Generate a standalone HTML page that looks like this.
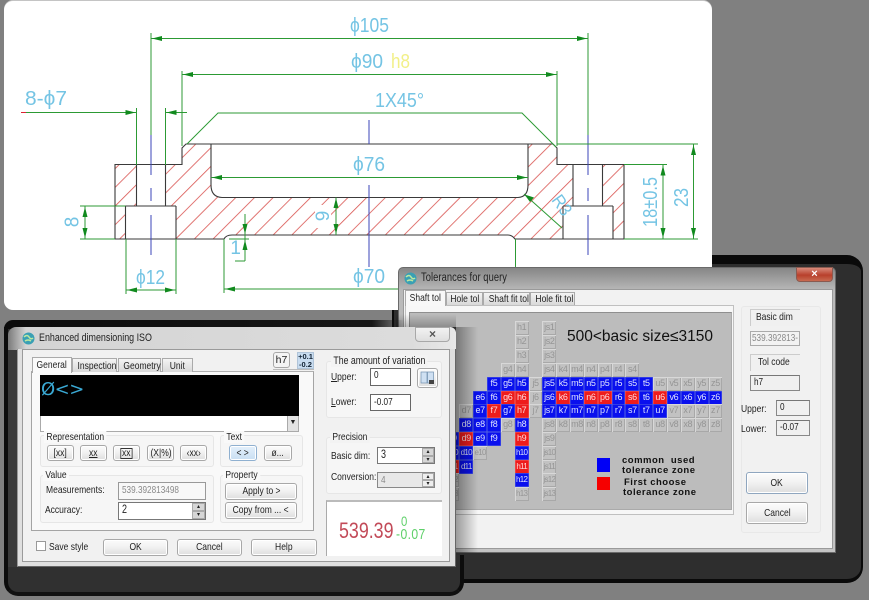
<!DOCTYPE html>
<html><head><meta charset="utf-8"><style>
html,body{margin:0;padding:0;background:#808080}
#w{position:relative;width:869px;height:600px;overflow:hidden;background:#808080;font:10.500px "Liberation Sans",sans-serif;color:#222;filter:blur(.3px)}
#w div{box-sizing:border-box}
.a{position:absolute}
.t{position:absolute;white-space:nowrap;line-height:12px;height:12px;transform:scaleX(.81);transform-origin:0 50%}
.b{position:absolute;border:1px solid #a8a8a8;border-radius:3px;background:linear-gradient(#fbfbfb,#f2f2f2 45%,#dedede);text-align:center;white-space:nowrap;box-shadow:inset 0 0 0 1px #fff}
.b span,.tab span{display:inline-block;transform:scaleX(.81);transform-origin:50% 50%}
.i{position:absolute;border:1px solid #888;border-top-color:#777;background:#fff;padding-left:3px;white-space:nowrap;overflow:hidden}
.i span{display:inline-block;transform:scaleX(.78);transform-origin:0 50%}
.g{position:absolute;border:1px solid #e6e6e6;border-radius:3px;background:#f6f6f6}
.l{position:absolute;background:#f0f0f0;padding:0 3px;line-height:12px;white-space:nowrap;transform:scaleX(.81);transform-origin:0 50%}
.tab{position:absolute;border:1px solid #aaa;border-bottom:0;background:linear-gradient(#f4f4f4,#d8d8d8);text-align:center;white-space:nowrap;line-height:14px}
.sp{position:absolute;background:#d6d6d6;border:1px solid #aaa;color:#222;font-size:6px;line-height:6px;text-align:center}
.r{position:absolute;left:445.500px;height:14px;white-space:nowrap;font-size:0}
.r span{display:inline-block;width:13.850px;height:14px;vertical-align:top;font-size:9px;letter-spacing:-.35px;line-height:13px;text-align:center;overflow:hidden}
.r span.x{font-size:8px;letter-spacing:-.7px}
.B{background:#0a10ee;color:#dfe4ff;box-shadow:inset 0 0 0 .5px #5566dd}
.R{background:#ee1c1c;color:#ffd9d9;box-shadow:inset 0 0 0 .5px #f06060}
.G{background:#c2c2c2;color:#959595;box-shadow:inset 1px 1px 0 #d8d8d8,inset -1px -1px 0 #a8a8a8}
</style></head><body><div id="w">

<!-- dialog 2 outer dark frame -->
<div class="a" style="left:392px;top:255px;width:471px;height:328px;background:#2e2e2e;border:2px solid #0a0a0a;border-radius:0 16px 16px 0;border-top-width:9px;border-bottom-width:4px"></div>

<!-- drawing card -->
<div class="a" style="left:4px;top:1px;width:708px;height:309px;background:#fff;border-radius:9px;box-shadow:0 -1px 0 #c4c4c4"></div>
<div class="a" style="left:600px;top:250px;width:108px;height:20px;background:#fff"></div>

<svg class="a" style="left:0;top:0" width="869" height="320" viewBox="0 0 869 320">
<defs>
<pattern id="h" patternUnits="userSpaceOnUse" width="13.22" height="13.22" patternTransform="rotate(45)"><line x1="2.34" y1="0" x2="2.34" y2="13.22" stroke="#d9534f" stroke-width=".8"/></pattern>
</defs>
<path d="M115 164.500H182V148L186 144H211V185Q211 197 222 197.500H518Q528 197 528 185V144H553L557 148V164.500H624V239H515Q512 235 508 235H232Q226 235 224 239H115Z" fill="url(#h)" stroke="none"/>
<rect x="136.500" y="164.500" width="29" height="42" fill="#fff"/><rect x="125.500" y="206" width="50.500" height="33" fill="#fff"/>
<rect x="573" y="164.500" width="29.500" height="42" fill="#fff"/><rect x="563" y="206" width="50" height="33" fill="#fff"/>
<rect x="315" y="205" width="16" height="23" fill="#fff"/>
<g fill="none" stroke="#3a3a3a" stroke-width="1.100">
<path d="M115 164.500H182V148L186 144H553L557 148V164.500H624V239H515Q512 235 508 235H232Q226 235 224 239H115Z"/>
<path d="M211 144V185Q211 197 222 197.500H518Q528 197 528 185V144"/>
<path d="M136.500 164.500V206M165.500 164.500V206M125.500 206H176M125.500 206V239M176 206V239"/>
<path d="M573 164.500V206M602.500 164.500V206M563 206H613M563 206V239M613 206V239"/>
</g>
<g stroke="#3b45b8" stroke-width="1" fill="none">
<path d="M151 135V175M151 188V201M151 215V255"/>
<path d="M588 135V175M588 188V201M588 215V255"/>
<path d="M369 120V144M369 185V267"/>
</g>
<g stroke="#2c9a34" stroke-width="1" fill="none">
<path d="M151 33V135M588 33V135M151 38.500H588"/>
<path d="M182 71V146M557 71V146M182 74.500H557"/>
<path d="M26 112.500H136.500M136.500 108V165M165.500 108V165M165.500 112.500H187"/>
<path d="M187 144L218 113H522L556 147"/>
<path d="M557 144H698M624 239H698M693.500 144V239M624 164.500H667M663 164.500V239"/>
<path d="M211 177.500H528"/>
<path d="M224 239V293M224 289H400M515.500 239V268"/>
<path d="M126 239V294M176 239V294M126 290H176"/>
<path d="M80 206H125.500M80 239H115M85 206V239"/>
<path d="M336 197.500V235"/>
<path d="M245 214V261M229 239H249M235 261H245"/>
<path d="M524 194L562 228"/>
</g>
<path d="M21 112.500H26" stroke="#d23" stroke-width="1"/>
<g fill="#118a1e">
<path d="M152 38.500l10-2.500v5zM587 38.500l-10-2.500v5zM183 74.500l10-2.500v5zM556 74.500l-10-2.500v5zM135.500 112.500l-10-2.500v5zM166.500 112.500l10-2.500v5zM212 177.500l10-2.500v5zM527 177.500l-10-2.500v5zM225 289l10-2.500v5zM127 290l10-2.500v5zM175 290l-10-2.500v5z"/>
<path d="M85 207l-2.500 10h5zM85 238l-2.500-10h5zM336 198l-2.500 10h5zM336 234l-2.500-10h5zM245 234l-2.500-10h5zM245 240l-2.500 10h5zM663 165.500l-2.500 10h5zM663 238l-2.500-10h5zM693.500 145l-2.500 10h5zM693.500 238l-2.500-10h5z"/>
<path d="M524.500 194.500l9.500 3-4 4.500z"/>
</g>
<g fill="#74c4e4" font-family="'Liberation Sans',sans-serif" font-size="20">
<text x="350" y="32" textLength="39" lengthAdjust="spacingAndGlyphs">ϕ105</text>
<text x="351" y="68" textLength="32" lengthAdjust="spacingAndGlyphs">ϕ90</text>
<text x="391" y="68" fill="#f2f088" textLength="19" lengthAdjust="spacingAndGlyphs">h8</text>
<text x="375" y="107" textLength="49" lengthAdjust="spacingAndGlyphs">1X45°</text>
<text x="353" y="171" textLength="32" lengthAdjust="spacingAndGlyphs">ϕ76</text>
<text x="353" y="283" textLength="32" lengthAdjust="spacingAndGlyphs">ϕ70</text>
<text x="136" y="284" textLength="29" lengthAdjust="spacingAndGlyphs">ϕ12</text>
<text x="25" y="105" textLength="42" lengthAdjust="spacingAndGlyphs">8-ϕ7</text>
<text x="241" y="254" text-anchor="end" font-size="19">1</text>
<text transform="translate(78.500 222) rotate(-90) scale(.95 1)" text-anchor="middle">8</text>
<text transform="translate(329 216) rotate(-90)" text-anchor="middle" font-size="19">9</text>
<text transform="translate(657 227) rotate(-90)" textLength="50" lengthAdjust="spacingAndGlyphs" font-size="20">18±0.5</text>
<text transform="translate(688 207) rotate(-90)" textLength="19" lengthAdjust="spacingAndGlyphs">23</text>
<text transform="translate(551 200) rotate(55)" font-size="18" textLength="21" lengthAdjust="spacingAndGlyphs">R3</text>
</g>
</svg>

<!-- DIALOG 2 -->
<div class="a" style="left:398px;top:267px;width:438px;height:286px;background:linear-gradient(#868686,#b9b9b9 8%,#c4c4c4);border:1px solid #6a6a6a;border-radius:5px 5px 0 0"></div>
<div class="a" style="left:404px;top:290px;width:428px;height:258px;background:#f2f2f2;box-shadow:0 0 0 1px #9a9a9a"></div>
<svg class="a" style="left:404px;top:272px" width="13" height="13" viewBox="0 0 13 13"><circle cx="6.500" cy="6.500" r="6" fill="#3aa0b4"/><path d="M2 5q3-3 5 0t4 1M3 9q3-2 6 0" stroke="#bfe8a0" stroke-width="1.500" fill="none"/></svg>
<div class="t" style="left:421px;top:272px;font-size:11.500px;letter-spacing:.1px;color:#222">Tolerances for query</div>
<div class="a" style="left:796px;top:267px;width:37px;height:15px;background:linear-gradient(#d88a7a,#b8402c 55%,#c86a50);border:1px solid #8a5a50;border-radius:0 0 4px 4px;color:#fff;text-align:center;font:bold 11px/12px 'Liberation Sans',sans-serif">×</div>

<div class="a" style="left:405px;top:305px;width:329px;height:210px;background:#f7f7f7;border:1px solid #c0c0c0"></div>
<div class="tab" style="left:405px;top:290px;width:41px;height:16px;background:#f8f8f8;z-index:2"><span>Shaft tol</span></div>
<div class="tab" style="left:446px;top:292px;width:37px;height:13px;line-height:13px"><span>Hole tol</span></div>
<div class="tab" style="left:483px;top:292px;width:47px;height:13px;line-height:13px"><span>Shaft fit tol</span></div>
<div class="tab" style="left:530px;top:292px;width:45px;height:13px;line-height:13px"><span>Hole fit tol</span></div>
<div class="a" style="left:409px;top:312px;width:323px;height:198px;background:#bcbcbc;border:1px solid #8f8f8f;border-right-color:#aaa;border-bottom-color:#aaa"></div>

<!-- grid -->
<div class="r" style="top:321px"><span></span><span></span><span></span><span></span><span></span><span class="G">h1</span><span></span><span class="G">js1</span></div>
<div class="r" style="top:335px"><span></span><span></span><span></span><span></span><span></span><span class="G">h2</span><span></span><span class="G">js2</span></div>
<div class="r" style="top:349px"><span></span><span></span><span></span><span></span><span></span><span class="G">h3</span><span></span><span class="G">js3</span></div>
<div class="r" style="top:363px"><span></span><span></span><span></span><span></span><span class="G">g4</span><span class="G">h4</span><span></span><span class="G">js4</span><span class="G">k4</span><span class="G">m4</span><span class="G">n4</span><span class="G">p4</span><span class="G">r4</span><span class="G">s4</span></div>
<div class="r" style="top:377px"><span></span><span></span><span></span><span class="B">f5</span><span class="B">g5</span><span class="B">h5</span><span class="G">j5</span><span class="B">js5</span><span class="B">k5</span><span class="B">m5</span><span class="B">n5</span><span class="B">p5</span><span class="B">r5</span><span class="B">s5</span><span class="B">t5</span><span class="G">u5</span><span class="G">v5</span><span class="G">x5</span><span class="G">y5</span><span class="G">z5</span></div>
<div class="r" style="top:390.500px"><span></span><span></span><span class="B">e6</span><span class="B">f6</span><span class="R">g6</span><span class="R">h6</span><span class="G">j6</span><span class="B">js6</span><span class="R">k6</span><span class="B">m6</span><span class="R">n6</span><span class="R">p6</span><span class="B">r6</span><span class="R">s6</span><span class="B">t6</span><span class="R">u6</span><span class="B">v6</span><span class="B">x6</span><span class="B">y6</span><span class="B">z6</span></div>
<div class="r" style="top:404px"><span></span><span class="G">d7</span><span class="B">e7</span><span class="R">f7</span><span class="B">g7</span><span class="R">h7</span><span class="G">j7</span><span class="B">js7</span><span class="B">k7</span><span class="B">m7</span><span class="B">n7</span><span class="B">p7</span><span class="B">r7</span><span class="B">s7</span><span class="B">t7</span><span class="B">u7</span><span class="G">v7</span><span class="G">x7</span><span class="G">y7</span><span class="G">z7</span></div>
<div class="r" style="top:418px"><span></span><span class="B">d8</span><span class="B">e8</span><span class="B">f8</span><span class="G">g8</span><span class="B">h8</span><span></span><span class="G">js8</span><span class="G">k8</span><span class="G">m8</span><span class="G">n8</span><span class="G">p8</span><span class="G">r8</span><span class="G">s8</span><span class="G">t8</span><span class="G">u8</span><span class="G">v8</span><span class="G">x8</span><span class="G">y8</span><span class="G">z8</span></div>
<div class="r" style="top:432px"><span class="B">c9</span><span class="R">d9</span><span class="B">e9</span><span class="B">f9</span><span></span><span class="R">h9</span><span></span><span class="G">js9</span></div>
<div class="r" style="top:446px"><span class="B x">c10</span><span class="B x">d10</span><span class="G x">e10</span><span></span><span></span><span class="B x">h10</span><span></span><span class="G x">js10</span></div>
<div class="r" style="top:459.500px"><span class="R x">c11</span><span class="B x">d11</span><span></span><span></span><span></span><span class="R x">h11</span><span></span><span class="G x">js11</span></div>
<div class="r" style="top:473px"><span class="G x">c12</span><span></span><span></span><span></span><span></span><span class="B x">h12</span><span></span><span class="G x">js12</span></div>
<div class="r" style="top:487px"><span class="G x">c13</span><span></span><span></span><span></span><span></span><span class="G x">h13</span><span></span><span class="G x">js13</span></div>

<div class="a" style="left:567px;top:329px;white-space:nowrap;font:15.500px/16px 'Liberation Sans',sans-serif;height:16px;color:#111">500&lt;basic size≤3150</div>
<div class="a" style="left:597px;top:458px;width:13px;height:14px;background:#0000f6"></div>
<div class="a" style="left:597px;top:477px;width:13px;height:13px;background:#f60000"></div>
<div class="a" style="left:622px;top:455px;white-space:nowrap;line-height:12px;font-weight:bold;font-size:9.500px;letter-spacing:.5px;color:#111">common&nbsp; used</div>
<div class="a" style="left:622px;top:465px;white-space:nowrap;line-height:12px;font-weight:bold;font-size:9.500px;letter-spacing:.5px;color:#111">tolerance zone</div>
<div class="a" style="left:624px;top:477px;white-space:nowrap;line-height:12px;font-weight:bold;font-size:9.500px;letter-spacing:.5px;color:#111">First choose</div>
<div class="a" style="left:623px;top:487px;white-space:nowrap;line-height:12px;font-weight:bold;font-size:9.500px;letter-spacing:.5px;color:#111">tolerance zone</div>

<!-- right panel dialog 2 -->
<div class="g" style="left:741px;top:306px;width:80px;height:227px;background:#f1f1f1;border-color:#e8e8e8"></div>
<div class="a" style="left:750px;top:309px;width:50px;height:17px;background:#f0f0f0;border-left:1px solid #ccc;border-top:1px solid #ccc;line-height:15px;padding-left:5px"><div class="t" style="line-height:15px;height:15px">Basic dim</div></div>
<div class="i" style="left:750px;top:331px;width:50px;height:15px;background:#f2f2f2;color:#8a8a8a;padding-left:1px;line-height:13px;border-color:#aaa"><span>539.392813-</span></div>
<div class="a" style="left:750px;top:354px;width:50px;height:17px;background:#f0f0f0;border-left:1px solid #ccc;border-top:1px solid #ccc;line-height:15px;padding-left:7px"><div class="t" style="line-height:15px;height:15px">Tol code</div></div>
<div class="i" style="left:750px;top:375px;width:50px;height:16px;background:#f0f0f0;line-height:13px"><span>h7</span></div>
<div class="t" style="left:741px;top:403px">Upper:</div>
<div class="i" style="left:776px;top:400px;width:34px;height:16px;background:#f0f0f0;line-height:12px"><span>0</span></div>
<div class="t" style="left:741px;top:423px">Lower:</div>
<div class="i" style="left:776px;top:420px;width:34px;height:16px;background:#f0f0f0;line-height:13px"><span>-0.07</span></div>
<div class="b" style="left:746px;top:472px;width:62px;height:22px;line-height:20px;border-color:#8fa6bf"><span>OK</span></div>
<div class="b" style="left:746px;top:502px;width:62px;height:22px;line-height:20px"><span>Cancel</span></div>

<!-- shadow of dialog 1 on dialog 2 -->
<div class="a" style="left:456px;top:327px;width:22px;height:226px;background:linear-gradient(90deg,rgba(0,0,0,.36),rgba(0,0,0,0))"></div>
<div class="a" style="left:396px;top:314px;width:60px;height:13px;background:linear-gradient(0deg,rgba(0,0,0,.25),rgba(0,0,0,0))"></div>

<!-- DIALOG 1 frame -->
<div class="a" style="left:4px;top:327px;width:452px;height:253px;background:#2e2e2e;border-left:4px solid #0c0c0c"></div>
<div class="a" style="left:4px;top:320px;width:400px;height:9px;background:linear-gradient(90deg,#0c0c0c,#161616 92%,rgba(20,20,20,0));border-radius:13px 0 0 0"></div>
<div class="a" style="left:4px;top:555px;width:460px;height:41px;background:#303030;border:4px solid #0c0c0c;border-top:0;border-radius:0 0 14px 14px;border-bottom-color:#111"></div>
<div class="a" style="left:8px;top:327px;width:448px;height:240px;background:linear-gradient(90deg,#7a7a7a,#d4d4d4 4%,#dcdcdc 90%,#e8e8e8);border-radius:8px 6px 0 0"></div>
<div class="a" style="left:8px;top:350px;width:9px;height:217px;background:#3a3a3a"></div>
<div class="a" style="left:17px;top:349px;width:439px;height:218px;background:#dfdfdf;border-left:1px solid #999;border-bottom:1px solid #666;border-right:1px solid #666"></div>
<div class="a" style="left:22px;top:349px;width:428px;height:213px;background:#f1f1f1;border:1px solid #9a9a9a"></div>
<svg class="a" style="left:22px;top:332px" width="13" height="13" viewBox="0 0 13 13"><circle cx="6.500" cy="6.500" r="6" fill="#3aa0b4"/><path d="M2 5q3-3 5 0t4 1M3 9q3-2 6 0" stroke="#bfe8a0" stroke-width="1.500" fill="none"/></svg>
<div class="t" style="left:39px;top:332px;font-size:11px">Enhanced dimensioning ISO</div>
<div class="a" style="left:415px;top:327px;width:35px;height:15px;background:linear-gradient(#f2f2f2,#dedede);border:1px solid #a8a8a8;border-radius:0 0 4px 4px;color:#555;text-align:center;font:bold 12px/12px 'Liberation Sans',sans-serif">×</div>

<!-- tab pane -->
<div class="a" style="left:31px;top:371px;width:283px;height:160px;background:#f9f9f9;border:1px solid #a4a4a4;border-top-color:#b0b0b0"></div>
<div class="tab" style="left:32px;top:357px;width:40px;height:16px;background:#fafafa;z-index:2"><span>General</span></div>
<div class="tab" style="left:72px;top:358px;width:45px;height:14px"><span>Inspection</span></div>
<div class="tab" style="left:118px;top:358px;width:43px;height:14px"><span>Geometry</span></div>
<div class="tab" style="left:162px;top:358px;width:31px;height:14px"><span>Unit</span></div>
<div class="a" style="left:40px;top:375px;width:259px;height:41px;background:#000"></div>
<div class="a" style="left:40px;top:416px;width:259px;height:16px;background:#fff;border:1px solid #aaa;border-top:0"></div>
<div class="a" style="left:287px;top:416px;width:12px;height:16px;background:#e2e2e2;border:1px solid #aaa;border-top:0;color:#222;text-align:center;font-size:7px;line-height:14px">▼</div>
<div class="a" style="left:41px;top:380px;height:20px;white-space:nowrap;font:18px/20px 'DejaVu Sans','Liberation Sans',sans-serif;color:#3aa9d4;letter-spacing:-.5px">Ø&lt;&gt;</div>

<!-- Representation -->
<div class="g" style="left:40px;top:435px;width:174px;height:32px"></div>
<div class="l" style="left:44px;top:431px;background:#f9f9f9">Representation</div>
<div class="b" style="left:47px;top:445px;width:27px;height:16px;line-height:14px"><span>[xx]</span></div>
<div class="b" style="left:80px;top:445px;width:27px;height:16px;line-height:14px"><span><u>xx</u></span></div>
<div class="b" style="left:113px;top:445px;width:27px;height:16px;line-height:14px"><span style="border:1px solid #333;padding:0 1px;line-height:9px">xx</span></div>
<div class="b" style="left:147px;top:445px;width:27px;height:16px;line-height:14px"><span>(X|%)</span></div>
<div class="b" style="left:180px;top:445px;width:27px;height:16px;line-height:14px"><span>‹xx›</span></div>

<!-- Text -->
<div class="g" style="left:220px;top:435px;width:83px;height:32px"></div>
<div class="l" style="left:224px;top:431px;background:#f9f9f9">Text</div>
<div class="b" style="left:229px;top:445px;width:28px;height:16px;line-height:14px;background:linear-gradient(#e4f0fb,#c8def2);border-color:#8fb0d0"><span>&lt; &gt;</span></div>
<div class="b" style="left:264px;top:445px;width:28px;height:16px;line-height:14px"><span>ø...</span></div>

<!-- Value -->
<div class="g" style="left:40px;top:475px;width:174px;height:48px"></div>
<div class="l" style="left:43px;top:469px;background:#f9f9f9">Value</div>
<div class="t" style="left:46px;top:484px">Measurements:</div>
<div class="i" style="left:118px;top:482px;width:88px;height:18px;background:#f8f8f8;color:#8a8a8a;line-height:15px;border-color:#999"><span>539.392813498</span></div>
<div class="t" style="left:45px;top:504px">Accuracy:</div>
<div class="i" style="left:118px;top:502px;width:88px;height:18px;line-height:15px;font-size:11.500px;border-color:#777"><span>2</span></div>
<div class="sp" style="left:192px;top:503px;width:13px;height:8px">▴</div>
<div class="sp" style="left:192px;top:511px;width:13px;height:8px">▾</div>

<!-- Property -->
<div class="g" style="left:220px;top:475px;width:83px;height:48px"></div>
<div class="l" style="left:223px;top:469px;background:#f9f9f9">Property</div>
<div class="b" style="left:225px;top:483px;width:72px;height:17px;line-height:15px"><span>Apply to &gt;</span></div>
<div class="b" style="left:225px;top:502px;width:72px;height:17px;line-height:15px"><span>Copy from ... &lt;</span></div>

<!-- bottom row -->
<div class="a" style="left:36px;top:541px;width:10px;height:10px;background:#fff;border:1px solid #999"></div>
<div class="t" style="left:49px;top:541px">Save style</div>
<div class="b" style="left:103px;top:539px;width:65px;height:17px;line-height:15px"><span>OK</span></div>
<div class="b" style="left:177px;top:539px;width:65px;height:17px;line-height:15px"><span>Cancel</span></div>
<div class="b" style="left:251px;top:539px;width:66px;height:17px;line-height:15px"><span>Help</span></div>

<!-- h7 and tolerance buttons -->
<div class="b" style="left:273px;top:352px;width:17px;height:16px;line-height:14px;box-shadow:none;background:#f4f4f4">h7</div>
<div class="a" style="left:297px;top:352px;width:17px;height:17px;background:#c8dcf0;border:1px solid #b0c4d8;font:bold 7.500px/7.500px 'Liberation Sans',sans-serif;text-align:center;color:#123">+0.1<br>-0.2</div>
<div class="a" style="left:273px;top:369px;width:41px;height:1px;background:#bbb"></div>

<!-- amount of variation -->
<div class="g" style="left:326px;top:361px;width:116px;height:57px"></div>
<div class="l" style="left:331px;top:355px;background:#f3f3f3;font-size:10.800px">The amount of variation</div>
<div class="t" style="left:331px;top:371px"><u>U</u>pper:</div>
<div class="i" style="left:370px;top:368px;width:41px;height:18px;line-height:13px;border-color:#666"><span>0</span></div>
<div class="b" style="left:417px;top:368px;width:21px;height:20px"></div>
<svg class="a" style="left:420px;top:371px" width="15" height="14" viewBox="0 0 15 14"><rect x="1" y="1" width="6" height="11" fill="#cfe0f2" stroke="#7090b0" stroke-width=".7"/><rect x="7.500" y="1" width="6" height="11" fill="#cfe0f2" stroke="#7090b0" stroke-width=".7"/><rect x="9" y="9" width="5" height="4" fill="#444"/></svg>
<div class="t" style="left:331px;top:396px"><u>L</u>ower:</div>
<div class="i" style="left:370px;top:394px;width:41px;height:17px;line-height:15px;border-color:#666"><span>-0.07</span></div>

<!-- precision -->
<div class="g" style="left:326px;top:437px;width:116px;height:57px"></div>
<div class="l" style="left:330px;top:431px;background:#f3f3f3">Precision</div>
<div class="t" style="left:331px;top:450px">Basic dim:</div>
<div class="i" style="left:377px;top:447px;width:58px;height:17px;line-height:14px;font-size:11.500px;border-color:#777"><span>3</span></div>
<div class="sp" style="left:422px;top:448px;width:12px;height:8px">▴</div>
<div class="sp" style="left:422px;top:456px;width:12px;height:7px">▾</div>
<div class="t" style="left:331px;top:471px">Conversion:</div>
<div class="i" style="left:377px;top:472px;width:58px;height:16px;background:#e8e8e8;color:#888;line-height:14px;border-color:#888"><span>4</span></div>
<div class="sp" style="left:422px;top:473px;width:12px;height:7px;background:#eee">▴</div>
<div class="sp" style="left:422px;top:480px;width:12px;height:7px;background:#eee">▾</div>

<!-- preview -->
<div class="a" style="left:326px;top:500px;width:116px;height:56px;background:#fff;border-left:1px solid #aaa;border-top:2px solid #bbb"></div>
<div class="t" style="left:339px;top:520px;height:22px;font:22px/22px 'Liberation Sans',sans-serif;color:#c24a58">539.39</div>
<div class="t" style="left:401px;top:514px;height:14px;font:14px/14px 'Liberation Sans',sans-serif;color:#5fd06a">0</div>
<div class="t" style="left:396px;top:527px;height:15px;font:15px/15px 'Liberation Sans',sans-serif;color:#5fd06a;letter-spacing:.5px">-0.07</div>

</div></body></html>
